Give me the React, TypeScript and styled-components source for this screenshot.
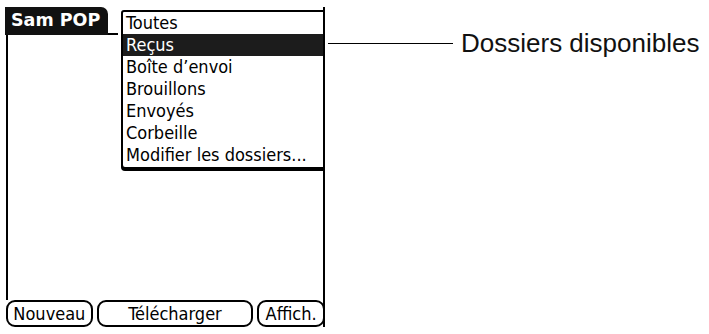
import React from 'react'
import styled, { createGlobalStyle } from 'styled-components'

const GlobalStyle = createGlobalStyle`
  html, body {
    margin: 0;
    padding: 0;
    background: #fff;
  }
  body {
    font-family: "DejaVu Sans", sans-serif;
    color: #000;
  }
`

const Page = styled.div`
  display: flex;
  align-items: flex-start;
  padding: 7px 0 0 5px;
  width: 709px;
  height: 334px;
  box-sizing: border-box;
`

const Screen = styled.div`
  position: relative;
  width: 320px;
  height: 320px;
  box-sizing: border-box;
  border-right: 2px solid #000;
  display: flex;
  flex-direction: column;
`

const TitleRow = styled.div`
  display: flex;
  align-items: flex-end;
  height: 28px;
`

const TitleTab = styled.div`
  background: #111;
  color: #fff;
  width: 103px;
  height: 28px;
  box-sizing: border-box;
  border-top-right-radius: 7px;
  padding: 3px 0 0 6px;
  font-family: "DejaVu Sans", sans-serif;
  font-weight: bold;
  font-size: 17.5px;
`

const TitleRule = styled.div`
  width: 10px;
  height: 2px;
  background: #000;
`

const Body = styled.div`
  flex: 1;
  border-left: 2px solid #000;
  margin-left: 1px;
`

const ButtonBar = styled.div`
  display: flex;
  gap: 4px;
  height: 27px;
  padding-left: 1px;
  margin-right: -2px;
`

const Button = styled.div<{ $w: number }>`
  width: ${p => p.$w}px;
  box-sizing: border-box;
  border: 2px solid #000;
  border-radius: 9px;
  display: flex;
  align-items: center;
  justify-content: center;
  font-size: 18px;
  font-stretch: condensed;
  font-family: "DejaVu Sans", sans-serif;
  padding-bottom: 1px;
`

const Menu = styled.div`
  position: absolute;
  left: 116px;
  top: 3px;
  right: -2px;
  box-sizing: border-box;
  border: 2px solid #000;
  border-radius: 3px 0 0 4px;
  box-shadow: 0 2px 0 #000;
  background: #fff;
  padding: 0 0 1px;
`

const MenuItem = styled.div<{ $active?: boolean }>`
  height: 22px;
  line-height: 22px;
  padding-left: 3px;
  font-size: 18px;
  font-stretch: condensed;
  font-family: "DejaVu Sans", sans-serif;
  white-space: nowrap;
  background: ${p => (p.$active ? '#1c1c1c' : 'transparent')};
  color: ${p => (p.$active ? '#fff' : '#000')};
`

const Callout = styled.div`
  display: flex;
  align-items: center;
  margin-top: 21px;
  margin-left: 3px;
`

const Leader = styled.div`
  width: 125px;
  height: 1px;
  background: #000;
`

const Label = styled.div`
  margin-left: 8px;
  font-family: "Liberation Sans", Arial, sans-serif;
  font-size: 26px;
  color: #111;
`

const folders = [
  'Toutes',
  'Reçus',
  'Boîte d’envoi',
  'Brouillons',
  'Envoyés',
  'Corbeille',
  'Modifier les dossiers...',
]

export default function App() {
  return (
    <>
      <GlobalStyle />
      <Page>
        <Screen>
          <TitleRow>
            <TitleTab>Sam POP</TitleTab>
            <TitleRule />
          </TitleRow>
          <Body />
          <ButtonBar>
            <Button $w={87}>Nouveau</Button>
            <Button $w={157}>Télécharger</Button>
            <Button $w={68}>Affich.</Button>
          </ButtonBar>
          <Menu>
            {folders.map((f, i) => (
              <MenuItem key={f} $active={i === 1}>
                {f}
              </MenuItem>
            ))}
          </Menu>
        </Screen>
        <Callout>
          <Leader />
          <Label>Dossiers disponibles</Label>
        </Callout>
      </Page>
    </>
  )
}
